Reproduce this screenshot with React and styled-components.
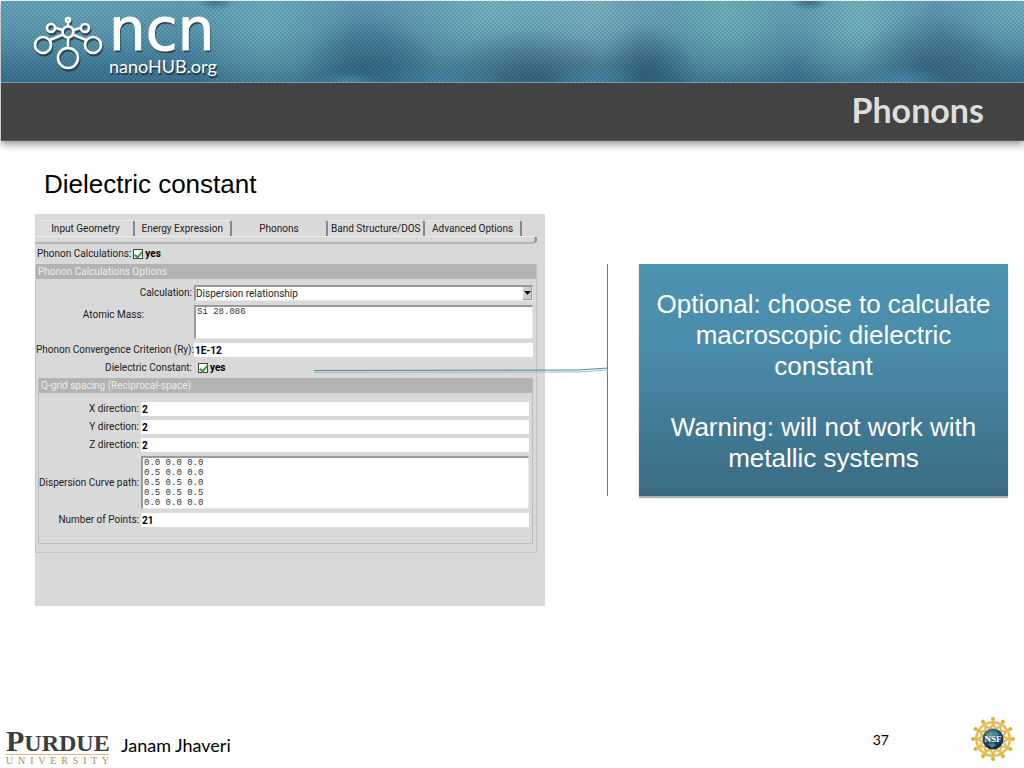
import React, { useState } from 'react';
import styled, { createGlobalStyle } from 'styled-components';

const tabs = ['Input Geometry', 'Energy Expression', 'Phonons', 'Band Structure/DOS', 'Advanced Options'];

const directions = [
    { id: 'x-direction', label: 'X direction:' },
    { id: 'y-direction', label: 'Y direction:' },
    { id: 'z-direction', label: 'Z direction:' }
];

const curvePath = ['0.0 0.0 0.0', '0.5 0.0 0.0', '0.5 0.5 0.0', '0.5 0.5 0.5', '0.0 0.0 0.0'].join('\n');

const spokes = [0, 30, 60, 90, 120, 150, 180, 210, 240, 270, 300, 330];

const MoleculeIcon = () => {
    const shapes = <>
        <path d="M34 27v-4M28 30l-6-2M40 30l6-2M28 35l-12 5M40 35l12 5M34 38v10" />
        <circle cx="34" cy="20" r="2" />
        <circle cx="17" cy="28" r="4" />
        <circle cx="51" cy="28" r="4" />
        <circle cx="34" cy="32" r="5.5" />
        <circle cx="9" cy="45" r="8" />
        <circle cx="59" cy="45" r="8" />
        <circle cx="34" cy="58" r="10" />
    </>;

    return <svg width="68" height="56" viewBox="0 15 68 56" fill="none" overflow="visible" aria-hidden="true">
        <g stroke="#1d3440" strokeWidth="3" opacity="0.75" transform="translate(1 2)">{shapes}</g>
        <g stroke="#fff" strokeWidth="2.6">{shapes}</g>
    </svg>;
};

const NsfLogo = () => {
    return <svg width="46" height="46" viewBox="-23 -23 46 46" role="img" aria-label="NSF">
        <defs>
            <radialGradient id="globe" cx="0.4" cy="0.3" r="0.8">
                <stop offset="0" stopColor="#5c9aa8" />
                <stop offset="0.45" stopColor="#235277" />
                <stop offset="1" stopColor="#0b1830" />
            </radialGradient>
        </defs>
        {spokes.map(angle => <g key={angle} transform={`rotate(${angle})`}>
            <circle cx="0" cy="-20" r="2" fill="#dcae3c" />
            <path d="M0-19v4M-5-16l5-1 5 1M0-15l-3 5M0-15l3 5" fill="none" stroke="#e2bd55" strokeWidth="2.4" />
        </g>)}
        <circle r="10.5" fill="url(#globe)" />
        <path d="M-7-5l4-2 3 2-2 2-4 1zM2-8l4 3-2 2-3-2zM-5 5l5-1 3 2-4 3z" fill="#6d9b78" opacity="0.7" />
        <text y="3" textAnchor="middle" fill="#fff" fontFamily="Liberation Serif, serif" fontWeight="700" fontSize="9">NSF</text>
    </svg>;
};

const PhononForm = () => {
    const [tab, setTab] = useState('Phonons');

    return <StyledPanel>
        <StyledTabs>
            {tabs.map(name => <StyledTab key={name} type="button" $active={name === tab} onClick={() => setTab(name)}>
                {name}
            </StyledTab>)}
        </StyledTabs>
        <StyledTabEdge />
        <StyledEnable>
            <label htmlFor="phonon-calc">Phonon Calculations:</label>
            <StyledCheck id="phonon-calc" type="checkbox" defaultChecked />
            <StyledYes>yes</StyledYes>
        </StyledEnable>
        <StyledGroup>
            <StyledGroupTitle>Phonon Calculations Options</StyledGroupTitle>
            <StyledFields $labels={156}>
                <StyledLabel htmlFor="calculation">Calculation:</StyledLabel>
                <StyledSelectBox>
                    <StyledSelect id="calculation" defaultValue="dispersion">
                        <option value="dispersion">Dispersion relationship</option>
                    </StyledSelect>
                    <StyledArrow aria-hidden="true">
                        <svg width="7" height="4" viewBox="0 0 7 4"><path d="M0 0h7L3.5 4z" fill="#111" /></svg>
                    </StyledArrow>
                </StyledSelectBox>
                <StyledMassLabel htmlFor="mass">Atomic Mass:</StyledMassLabel>
                <StyledArea id="mass" $height={34} defaultValue="Si 28.086" />
                <StyledLabel htmlFor="criterion">Phonon Convergence Criterion (Ry):</StyledLabel>
                <StyledInput id="criterion" type="text" defaultValue="1E-12" />
                <StyledLabel htmlFor="dielectric">Dielectric Constant:</StyledLabel>
                <StyledCheckRow>
                    <StyledCheck id="dielectric" type="checkbox" defaultChecked />
                    <StyledYes>yes</StyledYes>
                </StyledCheckRow>
            </StyledFields>
            <StyledSubGroup>
                <StyledGroupTitle>Q-grid spacing (Reciprocal-space)</StyledGroupTitle>
                <StyledFields $labels={100} $grid>
                    {directions.map(d => <React.Fragment key={d.id}>
                        <StyledLabel htmlFor={d.id}>{d.label}</StyledLabel>
                        <StyledInput id={d.id} type="text" defaultValue="2" />
                    </React.Fragment>)}
                    <StyledLabel htmlFor="curve">Dispersion Curve path:</StyledLabel>
                    <StyledArea id="curve" $height={53} defaultValue={curvePath} />
                    <StyledLabel htmlFor="points">Number of Points:</StyledLabel>
                    <StyledInput id="points" type="text" defaultValue="21" />
                </StyledFields>
            </StyledSubGroup>
        </StyledGroup>
    </StyledPanel>;
};

const App = () => {
    return <StyledSlide>
        <GlobalStyle />
        <StyledHeader>
            <StyledBanner>
                <MoleculeIcon />
                <StyledBrand>
                    <StyledNcn>ncn</StyledNcn>
                    <StyledHub>nanoHUB.org</StyledHub>
                </StyledBrand>
            </StyledBanner>
            <StyledTitleBar><h1>Phonons</h1></StyledTitleBar>
        </StyledHeader>
        <StyledMain>
            <StyledHeading>Dielectric constant</StyledHeading>
            <StyledColumns>
                <PhononForm />
                <StyledCallout>
                    <StyledConnector width="294" height="8" viewBox="0 0 294 8" fill="none" aria-hidden="true">
                        <path d="M0 6.500L264 6L294 4" stroke="#9fb9c5" />
                        <path d="M0 4.500L264 4L294 2" stroke="#4b87a0" />
                    </StyledConnector>
                    <StyledNote>
                        <p>Optional: choose to calculate macroscopic dielectric constant</p>
                        <p>Warning: will not work with metallic systems</p>
                    </StyledNote>
                </StyledCallout>
            </StyledColumns>
        </StyledMain>
        <StyledFooter>
            <StyledPurdue>
                <StyledPurdueName><big>P</big>URDUE</StyledPurdueName>
                <StyledUniversity>U N I V E R S I T Y</StyledUniversity>
            </StyledPurdue>
            <StyledAuthor>Janam Jhaveri</StyledAuthor>
            <StyledPage>37</StyledPage>
            <NsfLogo />
        </StyledFooter>
    </StyledSlide>;
};

const GlobalStyle = createGlobalStyle`
    * {
        box-sizing: border-box;
    }
    body {
        margin: 0;
        background: #fff;
        color: #000;
        font-family: "Liberation Sans", Arial, sans-serif;
    }
    h1, h2, p {
        margin: 0;
    }
`;

const StyledSlide = styled.div`
    min-height: 100vh;
    display: flex;
    flex-direction: column;
`;

const StyledHeader = styled.header`
    margin: 1px 0 0 1px;
    box-shadow: 0 3px 8px rgba(0, 0, 0, 0.45);
`;

const StyledBanner = styled.div`
    height: 82px;
    display: flex;
    align-items: flex-start;
    gap: 7px;
    padding: 14px 0 0 33px;
    border-bottom: 1px solid #7f9aa4;
    background:
        radial-gradient(circle, rgba(20, 60, 90, 0.22) 20%, transparent 50%) 0 0 / 4px 4px,
        radial-gradient(circle, rgba(20, 60, 90, 0.22) 20%, transparent 50%) 2px 2px / 4px 4px,
        radial-gradient(ellipse 40px 10px at 34% 100%, rgba(70, 150, 175, 0.8), transparent),
        radial-gradient(ellipse 70px 20px at 43% 100%, rgba(70, 145, 175, 0.7), transparent),
        radial-gradient(ellipse 50px 18px at 58% 100%, rgba(70, 140, 170, 0.8), transparent),
        radial-gradient(ellipse 50px 16px at 88% 100%, rgba(70, 150, 180, 0.8), transparent),
        radial-gradient(ellipse 20px 10px at 21% 0, rgba(40, 90, 115, 0.6), transparent),
        radial-gradient(ellipse 20px 10px at 79% 0, rgba(40, 90, 110, 0.7), transparent),
        radial-gradient(ellipse 70px 60px at 36% 90%, rgba(48, 98, 125, 0.8), transparent),
        radial-gradient(ellipse 90px 50px at 52% 95%, rgba(54, 96, 118, 0.8), transparent),
        radial-gradient(ellipse 50px 50px at 63% 90%, rgba(45, 90, 114, 0.8), transparent),
        radial-gradient(ellipse 80px 60px at 91% 90%, rgba(55, 98, 124, 0.8), transparent),
        radial-gradient(ellipse 90px 90px at 26% 25%, rgba(115, 190, 198, 0.7), transparent),
        radial-gradient(ellipse 120px 80px at 48% 10%, rgba(125, 190, 198, 0.8), transparent),
        radial-gradient(ellipse 90px 80px at 58% 15%, rgba(140, 190, 200, 0.7), transparent),
        radial-gradient(ellipse 90px 80px at 71% 20%, rgba(115, 190, 190, 0.8), transparent),
        radial-gradient(ellipse 80px 80px at 84% 25%, rgba(125, 195, 198, 0.8), transparent),
        radial-gradient(ellipse 90px 60px at 100% 10%, rgba(120, 190, 198, 0.7), transparent),
        radial-gradient(ellipse 200px 60px at 6% 5%, rgba(105, 175, 188, 0.7), transparent),
        linear-gradient(#649cb6, #5790ab 40%, #3b718c);
`;

const StyledBrand = styled.div`
    display: flex;
    flex-direction: column;
    color: #fff;
    text-shadow: 1px 2px 1px #1d3440;
`;

const StyledNcn = styled.span`
    margin-top: -5px;
    font-family: "DejaVu Sans", sans-serif;
    font-size: 58px;
    line-height: 40px;
    -webkit-text-stroke: 1px #fff;
`;

const StyledHub = styled.span`
    padding-top: 6px;
    font-family: Lato, sans-serif;
    font-size: 18px;
    line-height: 20px;
`;

const StyledTitleBar = styled.div`
    height: 58px;
    display: flex;
    align-items: center;
    justify-content: flex-end;
    padding: 0 40px 3px 0;
    background: #434343;
    border-bottom: 1px solid #5c5c5c;
    h1 {
        color: #dedede;
        font-family: Lato, sans-serif;
        font-size: 34px;
        font-weight: 700;
        line-height: 54px;
    }
`;

const StyledMain = styled.main`
    flex: 1;
    padding: 28px 16px 0 35px;
`;

const StyledHeading = styled.h2`
    padding-left: 9px;
    font-size: 26px;
    font-weight: 400;
    line-height: 30px;
`;

const StyledColumns = styled.div`
    display: grid;
    grid-template-columns: minmax(0, 510fr) minmax(0, 463fr);
    align-items: start;
    margin-top: 15px;
`;

const StyledPanel = styled.form`
    padding: 6px 8px 53px 0;
    background: #d9d9d9;
    color: #222;
    font-family: Roboto, sans-serif;
    font-size: 10px;
    line-height: 12px;
`;

const StyledTabs = styled.div`
    display: grid;
    grid-template-columns: repeat(5, 1fr);
    padding: 0 15px 0 3px;
`;

const StyledTab = styled.button`
    height: 16px;
    padding: 0;
    border: 0;
    border-top: 1px solid ${props => props.$active ? "#d9d9d9" : "#ececec"};
    border-right: 2px solid #888;
    border-top-right-radius: 3px;
    background: ${props => props.$active ? "#d9d9d9" : "#dcdcdc"};
    color: #222;
    font-family: inherit;
    font-size: 10px;
    white-space: nowrap;
`;

const StyledTabEdge = styled.div`
    height: 8px;
    border-top: 1px solid #eee;
    border-right: 2px solid #888;
    border-bottom: 2px solid #b4b4b4;
    border-radius: 0 4px 5px 0;
`;

const StyledEnable = styled.div`
    height: 20px;
    display: flex;
    align-items: center;
    padding-left: 2px;
    label {
        margin-right: 2px;
    }
`;

const StyledCheck = styled.input`
    appearance: none;
    width: 10px;
    height: 10px;
    margin: 0 2px 0 0;
    border: 1px solid #444;
    background: #fff;
    display: grid;
    place-items: center;
    &:checked::after {
        content: "";
        width: 3px;
        height: 6px;
        border: solid #35a23b;
        border-width: 0 2px 2px 0;
        transform: rotate(40deg);
    }
`;

const StyledYes = styled.span`
    color: #000;
    font-size: 10px;
    font-weight: 700;
`;

const StyledGroup = styled.div`
    padding: 0 3px 8px 0;
    border: 1px solid #c4c4c4;
    border-top: 0;
`;

const StyledGroupTitle = styled.div`
    height: 15px;
    margin-right: -3px;
    padding-left: 2px;
    background: #b3b3b3;
    color: #ededed;
    line-height: 15px;
`;

const StyledFields = styled.div`
    display: grid;
    grid-template-columns: ${props => props.$labels}px minmax(0, 1fr);
    align-items: center;
    column-gap: 2px;
    row-gap: 4px;
    padding: ${props => props.$grid ? "9px 3px 16px 0" : "6px 0 4px 0"};
`;

const StyledLabel = styled.label`
    text-align: right;
    white-space: nowrap;
`;

const StyledMassLabel = styled(StyledLabel)`
    align-self: start;
    padding: 4px 48px 0 0;
`;

const StyledInput = styled.input`
    width: 100%;
    height: 14px;
    padding: 0 1px;
    border: 0;
    background: #fff;
    color: #000;
    font-family: inherit;
    font-size: 10px;
    font-weight: 700;
`;

const StyledArea = styled.textarea`
    display: block;
    width: 100%;
    height: ${props => props.$height}px;
    padding: 0 1px;
    border: 1px solid #e8e8e8;
    border-top: 2px solid #999;
    border-left: 2px solid #999;
    background: #fff;
    color: #333;
    font-family: "Liberation Mono", monospace;
    font-size: 9px;
    line-height: 10px;
    resize: none;
    overflow: hidden;
`;

const StyledSelectBox = styled.div`
    display: flex;
    height: 16px;
    border: 1px solid #e8e8e8;
    border-top: 2px solid #999;
    border-left: 2px solid #999;
    background: #fff;
`;

const StyledSelect = styled.select`
    appearance: none;
    flex: 1;
    padding: 0;
    border: 0;
    background: #fff;
    color: #222;
    font-family: inherit;
    font-size: 10px;
`;

const StyledArrow = styled.span`
    width: 9px;
    display: flex;
    align-items: center;
    justify-content: center;
    background: #d0d0d0;
    border-right: 1px solid #999;
    border-bottom: 1px solid #999;
`;

const StyledCheckRow = styled.div`
    height: 13px;
    display: flex;
    align-items: center;
    padding-left: 4px;
`;

const StyledSubGroup = styled.div`
    margin-left: 2px;
    border: 1px solid #bdbdbd;
    border-top: 0;
    ${StyledGroupTitle} {
        margin-right: 0;
    }
`;

const StyledCallout = styled.aside`
    position: relative;
    margin: 50px 0 0 62px;
    padding-left: 31px;
    border-left: 1px solid #4b87a0;
`;

const StyledConnector = styled.svg`
    position: absolute;
    top: 102px;
    right: 100%;
`;

const StyledNote = styled.div`
    min-height: 232px;
    display: flex;
    flex-direction: column;
    justify-content: center;
    gap: 30px;
    padding: 12px 8px 8px;
    border-bottom: 2px solid #37657a;
    background: linear-gradient(#4c93b0, #4a8cab 35%, #3a6b82);
    box-shadow: 0 2px 1px #b5b0b0;
    color: #fff;
    font-size: 26px;
    line-height: 31px;
    text-align: center;
`;

const StyledFooter = styled.footer`
    display: flex;
    align-items: center;
    padding: 0 8px 2px 6px;
    font-family: Lato, sans-serif;
`;

const StyledPurdue = styled.div`
    width: 103px;
    padding-top: 18px;
    font-family: "Liberation Serif", serif;
`;

const StyledPurdueName = styled.div`
    color: #3d3d3d;
    font-size: 24px;
    font-weight: 700;
    line-height: 22px;
    border-bottom: 1px solid #d8bd8c;
    big {
        font-size: 30px;
    }
`;

const StyledUniversity = styled.div`
    color: #b58d4e;
    font-size: 10px;
    line-height: 11px;
    text-align-last: justify;
`;

const StyledAuthor = styled.span`
    flex: 1;
    padding: 12px 0 0 12px;
    font-size: 18px;
`;

const StyledPage = styled.span`
    margin-right: 81px;
    font-size: 14px;
`;

export default App;
